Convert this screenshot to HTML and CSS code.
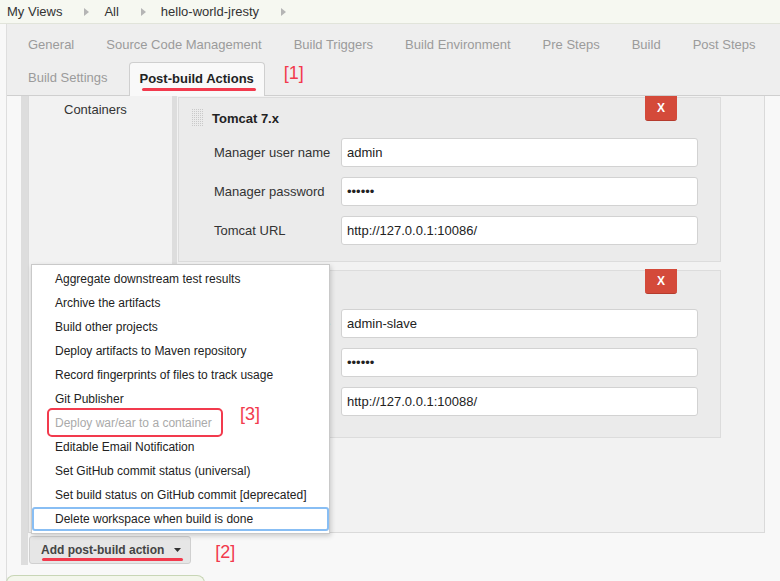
FILE: index.html
```html
<!DOCTYPE html>
<html>
<head>
<meta charset="utf-8">
<title>hello-world-jresty Config</title>
<link rel="stylesheet" href="styles.css">
</head>
<body>
<svg class="defs" width="0" height="0">
  <defs>
    <pattern id="dots" width="2" height="2" patternUnits="userSpaceOnUse">
      <rect width="1" height="1" fill="#c9c9c9"/>
    </pattern>
  </defs>
</svg>
<div class="crumbs">
  <span class="crumb">My Views</span>
  <span class="sep"><svg width="5" height="8" viewBox="0 0 5 8"><path d="M0 0L5 4L0 8Z" fill="#b5b5b5"/></svg></span>
  <span class="crumb">All</span>
  <span class="sep"><svg width="5" height="8" viewBox="0 0 5 8"><path d="M0 0L5 4L0 8Z" fill="#b5b5b5"/></svg></span>
  <span class="crumb">hello-world-jresty</span>
  <span class="sep"><svg width="5" height="8" viewBox="0 0 5 8"><path d="M0 0L5 4L0 8Z" fill="#b5b5b5"/></svg></span>
</div>
<div class="page">
  <div class="tabs">
    <div class="tab-row">
      <div class="tab">General</div>
      <div class="tab">Source Code Management</div>
      <div class="tab">Build Triggers</div>
      <div class="tab">Build Environment</div>
      <div class="tab">Pre Steps</div>
      <div class="tab">Build</div>
      <div class="tab">Post Steps</div>
    </div>
    <div class="tab-row">
      <div class="tab">Build Settings</div>
      <div class="tab active"><span class="marked">Post-build Actions</span></div>
      <div class="tag tag1">[1]</div>
    </div>
  </div>
  <div class="content">
    <div class="section">
      <div class="panel">
        <div class="setting-name">Containers</div>
        <div class="containers">
          <div class="box">
            <div class="box-head">
              <svg class="handle" width="11" height="18"><rect width="11" height="18" fill="url(#dots)"/></svg>
              <span class="title">Tomcat 7.x</span>
              <span class="del">X</span>
            </div>
            <div class="rows">
              <label class="lbl">Manager user name</label>
              <input class="field" type="text" value="admin">
              <label class="lbl">Manager password</label>
              <input class="field" type="password" value="123456">
              <label class="lbl">Tomcat URL</label>
              <input class="field" type="text" value="http://127.0.0.1:10086/">
            </div>
          </div>
          <div class="box alt">
            <div class="box-head">
              <svg class="handle" width="11" height="18"><rect width="11" height="18" fill="url(#dots)"/></svg>
              <span class="title">Tomcat 7.x</span>
              <span class="del">X</span>
            </div>
            <div class="rows">
              <label class="lbl">Manager user name</label>
              <input class="field" type="text" value="admin-slave">
              <label class="lbl">Manager password</label>
              <input class="field" type="password" value="123456">
              <label class="lbl">Tomcat URL</label>
              <input class="field" type="text" value="http://127.0.0.1:10088/">
            </div>
          </div>
        </div>
      </div>
      <div class="add-row">
        <div class="add-btn"><span>Add post-build action</span><svg width="7" height="4" viewBox="0 0 7 4"><path d="M0 0H7L3.5 4Z" fill="#333"/></svg></div>
        <div class="tag tag2">[2]</div>
      </div>
      <ul class="menu">
        <li class="item">Aggregate downstream test results</li>
        <li class="item">Archive the artifacts</li>
        <li class="item">Build other projects</li>
        <li class="item">Deploy artifacts to Maven repository</li>
        <li class="item">Record fingerprints of files to track usage</li>
        <li class="item">Git Publisher</li>
        <li class="item disabled">Deploy war/ear to a container<span class="ring"></span><span class="tag tag3">[3]</span></li>
        <li class="item">Editable Email Notification</li>
        <li class="item">Set GitHub commit status (universal)</li>
        <li class="item">Set build status on GitHub commit [deprecated]</li>
        <li class="item focus">Delete workspace when build is done</li>
      </ul>
    </div>
  </div>
  <div class="savebar"></div>
</div>
</body>
</html>
```
FILE: styles.css
```css
* { box-sizing: border-box; }
html, body { margin: 0; padding: 0; }
body {
  width: 780px;
  height: 581px;
  overflow: hidden;
  background: #f8f8f8;
  font-family: "Liberation Sans", Arial, Helvetica, sans-serif;
  color: #333;
}
.defs { position: absolute; width: 0; height: 0; }

.crumbs {
  height: 24px;
  background: #f6f8f1;
  border-bottom: 1px solid #e1e4da;
  display: flex;
  align-items: center;
  padding-left: 7px;
  font-size: 13px;
  color: #333;
}
.sep { display: flex; margin: 0 15px 0 22px; }

.page { margin-left: 6px; border-left: 1px solid #dedede; }

.tabs {
  background: #eeeeee;
  border-bottom: 1px solid #cfcfcf;
  padding: 4px 0 0 5px;
}
.tab-row { display: flex; height: 34px; }
.tab-row + .tab-row { margin-top: -1px; }
.tab {
  height: 34px;
  line-height: 34px;
  padding: 0 16px;
  font-size: 13px;
  color: #9b9b9b;
  white-space: nowrap;
}
.tab.active {
  margin: 1px 0 -1px 5px;
  padding: 0 10px;
  line-height: 32px;
  background: #f9f9f9;
  border: 1px solid #cfcfcf;
  border-bottom: 0;
  border-radius: 4px 4px 0 0;
  font-weight: bold;
  color: #222;
}
.marked { position: relative; display: inline-block; line-height: 16px; }
.marked::after {
  content: "";
  position: absolute;
  left: 2px;
  right: -2px;
  bottom: -4px;
  height: 3px;
  border-radius: 2px;
  background: #f23a4d;
}
.tag { color: #f23a4d; font-size: 18px; line-height: 24px; white-space: nowrap; }
.tag1 { margin-left: 19px; }

.content { padding: 0 15px 0 14px; }
.section {
  position: relative;
  border-left: 7px solid #dddddd;
  padding-bottom: 1px;
}
.panel {
  display: grid;
  grid-template-columns: 143px 1fr;
  background: #f2f2f2;
  border: 1px solid #dadada;
  border-top: 0;
}
.setting-name { padding: 6px 0 0 35px; font-size: 13px; line-height: 16px; color: #333; }
.containers {
  border-left: 5px solid #dddddd;
  padding: 1px 43px 94px 1px;
}
.box {
  background: #ebebeb;
  border: 1px solid #dcdcdc;
  margin-bottom: 8px;
}
.box.alt { margin-bottom: 0; }
.box-head {
  height: 40px;
  display: flex;
  align-items: center;
  padding-left: 13px;
}
.box.alt .box-head { height: 38px; }
.handle { margin-right: 9px; }
.title { font-weight: bold; font-size: 13px; color: #222; }
.del {
  align-self: flex-start;
  margin: -2px 43px 0 auto;
  width: 32px;
  height: 25px;
  display: flex;
  align-items: center;
  justify-content: center;
  background: #d44a3a;
  border-bottom: 1px solid #b53b2d;
  border-radius: 0 0 3px 3px;
  color: #fff;
  font-weight: bold;
  font-size: 12px;
}
.rows {
  display: grid;
  grid-template-columns: 127px 1fr;
  row-gap: 10px;
  align-items: center;
  padding: 0 22px 16px 35px;
}
.box.alt .rows { padding-bottom: 21px; }
.lbl { font-size: 13px; color: #333; }
.field {
  height: 29px;
  width: 100%;
  margin: 0;
  padding: 0 5px;
  border: 1px solid #d2d2d2;
  border-radius: 3px;
  background: #fff;
  font-family: inherit;
  font-size: 13px;
  color: #222;
  outline: none;
}

.add-row { display: flex; align-items: center; padding: 3px 0 0 1px; }
.add-btn {
  position: relative;
  height: 28px;
  display: flex;
  align-items: center;
  gap: 10px;
  padding: 0 9px 0 11px;
  background: #e6e6e6;
  border: 1px solid #d0d0d0;
  border-radius: 3px;
  font-weight: bold;
  font-size: 12px;
  color: #444;
}
.add-btn::after {
  content: "";
  position: absolute;
  left: 12px;
  right: 7px;
  top: 21px;
  height: 3px;
  border-radius: 2px;
  background: #f23a4d;
}
.tag2 { margin-left: 24px; margin-top: 4px; }

.menu {
  position: absolute;
  left: 3px;
  top: 168px;
  width: 299px;
  margin: 0;
  padding: 2px 0;
  list-style: none;
  background: #fff;
  border: 1px solid #c9c9c9;
  box-shadow: 1px 2px 5px rgba(0, 0, 0, 0.18);
  z-index: 5;
}
.item {
  position: relative;
  height: 24px;
  line-height: 24px;
  padding-left: 23px;
  font-size: 12px;
  color: #222;
  white-space: nowrap;
}
.item.disabled { color: #aaaaaa; }
.ring {
  position: absolute;
  left: 15px;
  top: -3px;
  width: 176px;
  height: 29px;
  border: 2px solid #f23a4d;
  border-radius: 5px;
}
.tag3 { position: absolute; left: 208px; top: -9px; }
.item.focus {
  border: 2px solid #88bef4;
  border-radius: 3px;
  line-height: 20px;
  padding-left: 21px;
}

.savebar {
  margin: 10px 0 0 -1px;
  width: 199px;
  height: 20px;
  background: #f3f6ec;
  border: 1px solid #c8d6b6;
  border-bottom: 0;
  border-radius: 8px 8px 0 0;
}
```
